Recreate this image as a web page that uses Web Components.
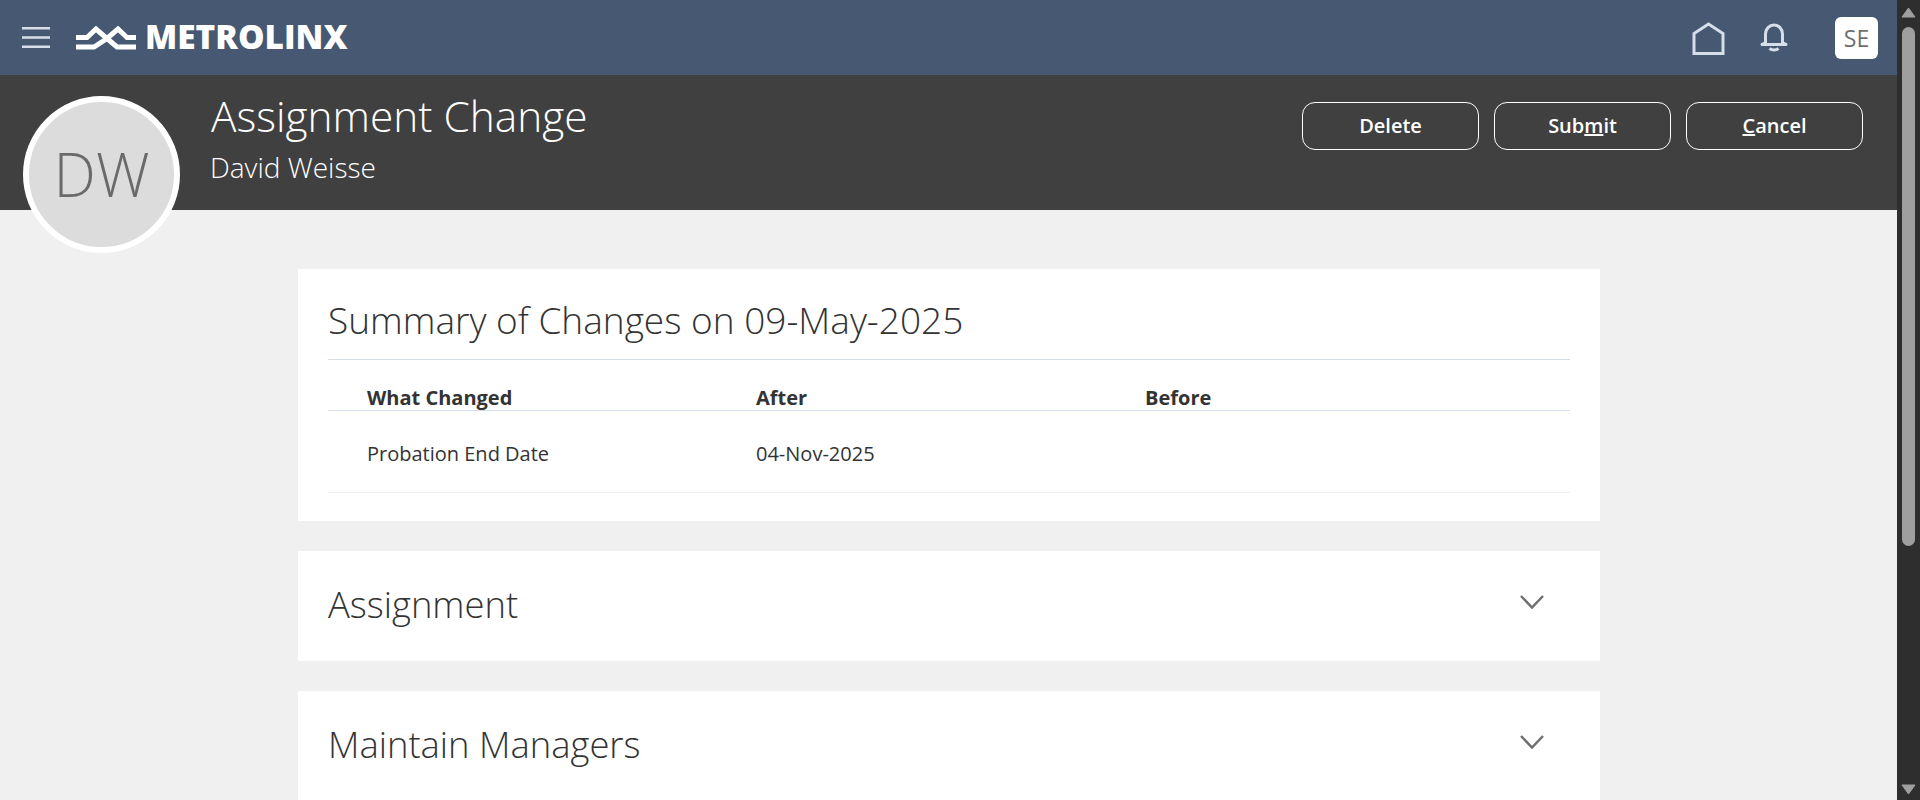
<!DOCTYPE html>
<html lang="en">
<head>
<meta charset="utf-8">
<title>Assignment Change</title>
<style>
html,body{margin:0;height:100%;overflow:hidden;background:#f0f0f0}
body{font-family:"Open Sans","Noto Sans",sans-serif}
</style>
</head>
<body>
<mx-app>
  <mx-topbar></mx-topbar>
  <mx-pagehead title="Assignment Change" sub="David Weisse" initials="DW">
    <mx-button>Delete</mx-button>
    <mx-button>Sub<u>m</u>it</mx-button>
    <mx-button><u>C</u>ancel</mx-button>
  </mx-pagehead>
  <mx-content>
    <mx-summary heading="Summary of Changes on 09-May-2025"></mx-summary>
    <mx-section heading="Assignment"></mx-section>
    <mx-section heading="Maintain Managers"></mx-section>
  </mx-content>
</mx-app>
<script>
const def=(name,html)=>customElements.define(name,class extends HTMLElement{
  connectedCallback(){
    if(this.shadowRoot)return;
    const r=this.attachShadow({mode:'open'});
    r.innerHTML=typeof html==='function'?html(this):html;
  }
});
def('mx-app',`<style>
:host{display:flex;height:100vh;overflow:hidden;background:#f0f0f0}
.page{flex:1;min-width:0;display:flex;flex-direction:column;overflow:hidden}
.bar{flex:none;width:23px;background:#2e2e2e;display:flex;flex-direction:column;align-items:center}
.thumb{width:13px;height:519px;margin-top:9px;border-radius:7px;background:#9f9f9f}
.up,.down{display:block;flex:none}
.up{margin-top:7px}
.down{margin-top:auto;margin-bottom:5px}
</style><div class="page"><slot></slot></div>
<div class="bar" aria-hidden="true">
<svg class="up" width="15" height="11" viewBox="0 0 15 11"><path d="M7.5 1 14 10H1z" fill="#9f9f9f" stroke="#9f9f9f" stroke-linejoin="round"/></svg>
<div class="thumb"></div>
<svg class="down" width="15" height="11" viewBox="0 0 15 11"><path d="M7.5 10 14 1H1z" fill="#9f9f9f" stroke="#9f9f9f" stroke-linejoin="round"/></svg>
</div>`);
def('mx-topbar',`<style>
:host{display:flex;flex:none;align-items:center;height:75px;background:#465872;color:#fff}
.menu{margin-left:22px;display:block}
.logo{margin-left:26px;display:block}
.word{margin-left:9px;font:800 33.400px/1 "Open Sans",sans-serif;color:#fff;position:relative;top:-1px}
.right{margin-left:auto;display:flex;align-items:center}
.home{display:block;margin-top:1px}
.bell{display:block;margin-left:35px}
.user{margin-left:47px;margin-right:19px;width:43px;height:42px;border-radius:6px;background:#fff;color:#6f6f6f;font:400 23px/42px "Open Sans",sans-serif;text-align:center}
</style>
<svg class="menu" width="28" height="21" viewBox="0 0 28 21"><path d="M0 1.200h28M0 10.500h28M0 19.800h28" stroke="#d6deea" stroke-width="2.500"/></svg>
<svg class="logo" width="60" height="24" viewBox="0 0 60 24" fill="none" stroke="#fff" stroke-width="5"><path d="M0 11.500H11L20 3 31 12.500 41 21H60"/><path d="M0 21H18L31 12.500 42 3 51 11.500H60"/></svg>
<span class="word">METROLINX</span>
<div class="right">
<svg class="home" width="33" height="33" viewBox="0 0 33 33" fill="none" stroke="#d6deea" stroke-width="3"><path d="M2 31.500V11.500L16.500 2 31 11.500V31.500Z"/></svg>
<svg class="bell" width="28" height="29" viewBox="0 0 28 29" fill="none" stroke="#d6deea" stroke-width="3"><path d="M5.500 20V11a8.500 9 0 0 1 17 0V20L26 21.500H2Z" stroke-linejoin="round"/><path d="M9.500 25.500c2.500 2 6.500 2 9 0"/></svg>
<div class="user">SE</div>
</div>`);
def('mx-pagehead',h=>`<style>
:host{display:flex;flex:none;position:relative;height:135px;background:#404040;color:#fff}
.avatar{position:absolute;left:23px;top:21px;box-sizing:border-box;width:157px;height:157px;border:6px solid #fff;border-radius:50%;background:#dcdcdc;color:#6a6a6a;font:350 60px/145px "Open Sans",sans-serif;text-align:center;z-index:1}
.text{margin-left:211px;padding-top:16px}
h1{margin:0;font:300 42.400px/1.2 "Open Sans",sans-serif}
p{margin:9px 0 0 -1px;font:300 28px/1.2 "Open Sans",sans-serif}
.actions{margin-left:auto;margin-right:34px;padding-top:27px;display:flex;gap:15px;align-items:flex-start}
</style><div class="avatar">${h.getAttribute('initials')}</div>
<div class="text"><h1>${h.getAttribute('title')}</h1><p>${h.getAttribute('sub')}</p></div>
<div class="actions"><slot></slot></div>`);
def('mx-button',`<style>
:host{display:flex;align-items:center;justify-content:center;box-sizing:border-box;width:177px;height:48px;border:1px solid #fff;border-radius:13px;color:#fff;font:600 20px/1 "Open Sans",sans-serif}
</style><slot></slot>`);
def('mx-content',`<style>
:host{display:flex;flex-direction:column;gap:30px;flex:1;min-height:0;overflow:hidden;padding:59px 297px 0 298px}
</style><slot></slot>`);
def('mx-summary',h=>`<style>
:host{display:block;flex:none;box-sizing:border-box;height:252px;background:#fff;padding:0 30px;color:#333}
h2{margin:0;box-sizing:border-box;height:91px;border-bottom:1px solid #d6deea;font:300 37px/1 "Open Sans",sans-serif;padding-top:32px}
.grid{display:grid;grid-template-columns:389px 389px 1fr;padding-left:39px}
.th{height:50px;box-sizing:border-box;padding-top:26px;font:700 20px/24px "Open Sans",sans-serif}
.td{height:81px;box-sizing:border-box;padding-top:31px;font:400 20px/24px "Open Sans",sans-serif}
.line{height:1px;margin-left:-39px;grid-column:1/-1;background:#d6deea}
.soft{background:#eef0f2}
</style><h2>${h.getAttribute('heading')}</h2>
<div class="grid">
<div class="th">What Changed</div><div class="th">After</div><div class="th">Before</div>
<div class="line"></div>
<div class="td">Probation End Date</div><div class="td">04-Nov-2025</div><div class="td"></div>
<div class="line soft"></div>
</div>`);
def('mx-section',h=>`<style>
:host{display:flex;flex:none;align-items:center;box-sizing:border-box;height:110px;background:#fff;padding:0 56px 0 30px;color:#333}
h2{margin:-3px 0 0;font:300 36.400px/1 "Open Sans",sans-serif}
svg{margin-left:auto;display:block;margin-top:-8px}
</style><h2>${h.getAttribute('heading')}</h2>
<svg width="24" height="14" viewBox="0 0 24 14" fill="none" stroke="#6f6f6f" stroke-width="2.500"><path d="M1 1 12 12.500 23 1"/></svg>`);
</script>
</body>
</html>
